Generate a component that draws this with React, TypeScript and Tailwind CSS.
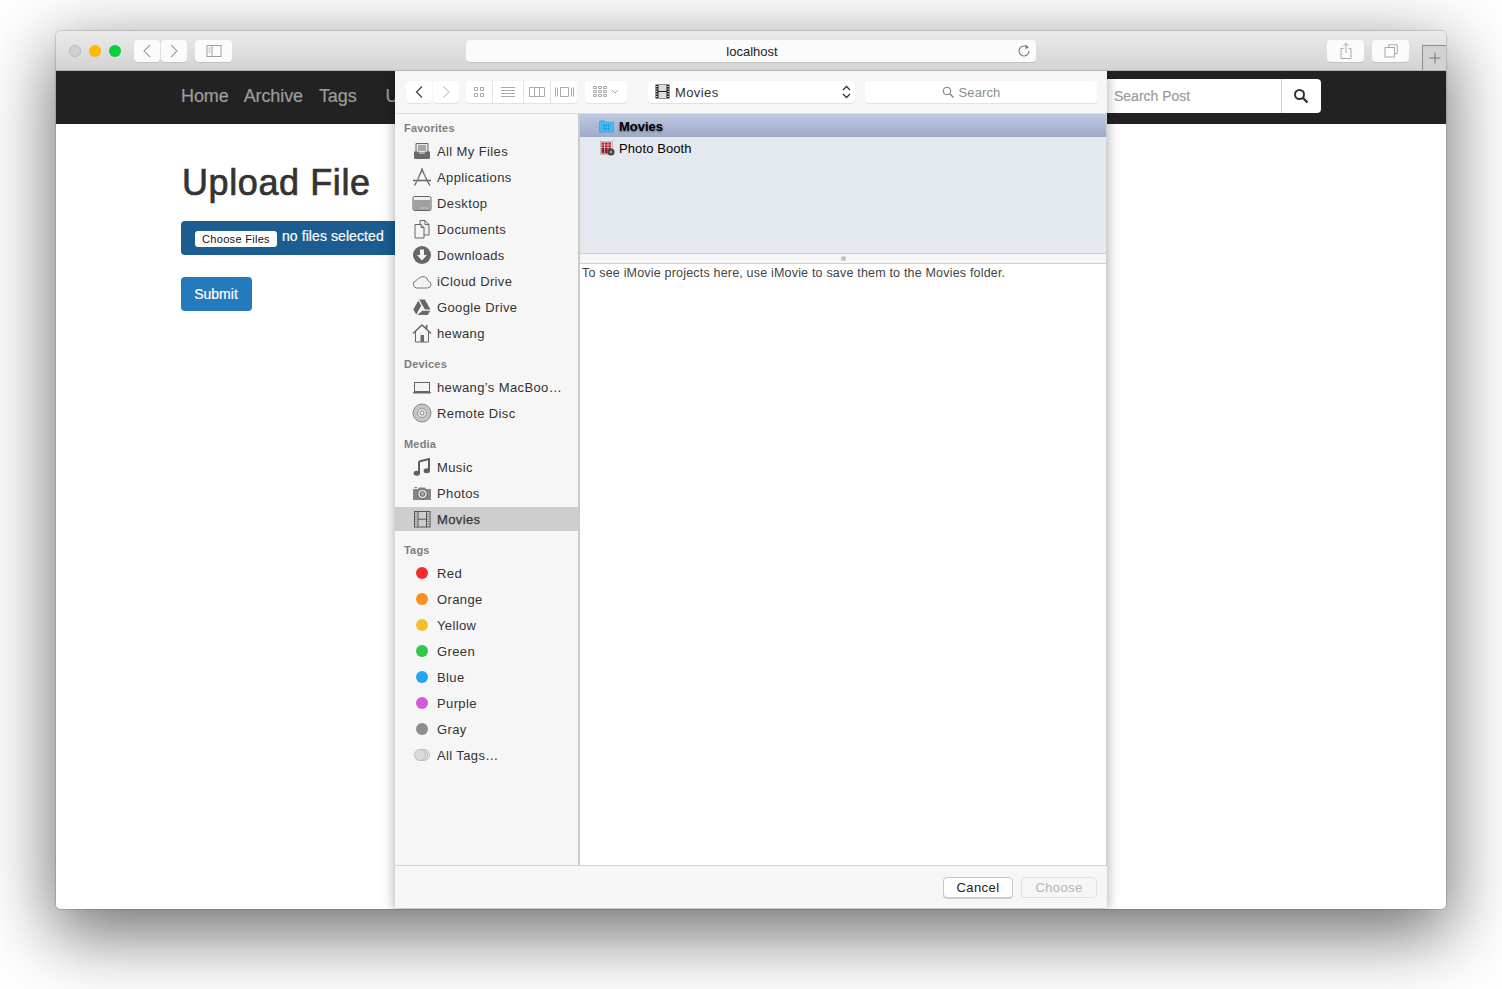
import type { ReactNode } from "react";

const FONT = "font-['Liberation_Sans',Arial,sans-serif]";

function Ico({ children, w = 20, h = 20, box = "0 0 20 20" }: { children: ReactNode; w?: number; h?: number; box?: string }) {
  return (
    <svg width={w} height={h} viewBox={box} fill="none" aria-hidden>
      {children}
    </svg>
  );
}

const G = "#666";

const icons: Record<string, ReactNode> = {
  files: (
    <Ico>
      <path d="M4 2.500h12v9.500H4z" fill="#e8e8e8" stroke={G} />
      <path d="M6 5h8M6 7h8M6 9h8" stroke={G} />
      <path d="M2 10.500h4.500l1 2.500h5l1-2.500H18v6a1.500 1.500 0 0 1-1.500 1.500h-13A1.500 1.500 0 0 1 2 16.500z" fill="#6a6a6a" />
    </Ico>
  ),
  apps: (
    <Ico>
      <path d="M10.500 1.500 5.500 13M9.500 1.500l6 13M1 13.500h18M2.500 18.500l3.500-6M18 18.500l-3.500-6" stroke={G} strokeWidth="1.400" />
      <path d="M7.500 8.500 4 16M12.500 7.500 14.500 12" stroke="#999" />
    </Ico>
  ),
  desktop: (
    <Ico>
      <rect x="1" y="3.500" width="18" height="14" rx="1.500" fill="#eee" stroke={G} />
      <rect x="1.500" y="7" width="17" height="10" fill="#a0a0a0" />
      <path d="M9 15h.9M11 15h.9M13 15h.9M15 15h.9" stroke="#fff" />
    </Ico>
  ),
  docs: (
    <Ico>
      <path d="M8 1.500h5l4 4v10.500H8z" fill="#eee" stroke={G} />
      <path d="M13 1.500v4h4" stroke={G} />
      <path d="M3 5.500h6l3 3v10.500H3z" fill="#f4f4f4" stroke={G} />
      <path d="M9 5.500v3h3" stroke={G} />
    </Ico>
  ),
  downloads: (
    <Ico>
      <circle cx="10" cy="10" r="9" fill="#666" />
      <path d="M8 4.500h4v5.500h3l-5 5.500L5 10h3z" fill="#f4f4f4" />
    </Ico>
  ),
  cloud: (
    <Ico>
      <path d="M4.500 17h11a3.500 3.500 0 0 0 .8-6.900A5.500 5.500 0 0 0 6.700 7.500 3 3 0 0 0 4.500 9.500 3.800 3.800 0 0 0 4.500 17z" fill="#f4f4f4" stroke="#777" />
    </Ico>
  ),
  drive: (
    <Ico>
      <path d="M7.200 2.500h5.600l5.700 10h-5.600z" fill="#666" />
      <path d="M6.300 3.800 9.200 8.800 4.200 17.500 1.300 12.500z" fill="#666" />
      <path d="M10.200 13.800h8.300L15.600 18H5.400z" fill="#6c6c6c" />
    </Ico>
  ),
  home: (
    <Ico>
      <path d="M1 10.500 10 2l9 8.500" stroke={G} strokeWidth="1.500" />
      <path d="M3.500 9v10h13V9" fill="#f4f4f4" stroke={G} />
      <path d="M14.500 2v4" stroke={G} strokeWidth="1.800" />
      <rect x="8.500" y="12" width="3.500" height="7" fill="#6a6a6a" />
    </Ico>
  ),
  laptop: (
    <Ico>
      <rect x="2.500" y="5.500" width="15" height="9" fill="#f4f4f4" stroke={G} />
      <path d="M1 15h18v.5a1 1 0 0 1-1 1H2a1 1 0 0 1-1-1z" fill="#666" />
    </Ico>
  ),
  disc: (
    <Ico>
      <circle cx="10" cy="10" r="9" fill="#c4c4c4" stroke="#888" />
      <circle cx="10" cy="10" r="4.500" fill="#e4e4e4" stroke="#999" />
      <circle cx="10" cy="10" r="2" fill="#f6f6f6" stroke="#888" />
    </Ico>
  ),
  music: (
    <Ico>
      <path d="M7 4.500 17 2v11.500" stroke="#5f5f5f" strokeWidth="2" />
      <path d="M7 4.500V16" stroke="#5f5f5f" strokeWidth="2" />
      <ellipse cx="4.800" cy="16.300" rx="3.200" ry="2.500" fill="#5f5f5f" />
      <ellipse cx="14.800" cy="13.800" rx="3.200" ry="2.500" fill="#5f5f5f" />
    </Ico>
  ),
  photos: (
    <Ico>
      <path d="M1 6h5l1-1.500h6L14 6h5v11H1z" fill="#858585" />
      <path d="M2.500 4.500h2.500" stroke="#777" strokeWidth="1.200" />
      <circle cx="10.500" cy="11" r="4.800" fill="#ddd" stroke="#666" />
      <circle cx="10.500" cy="11" r="2.300" fill="#aaa" stroke="#666" />
    </Ico>
  ),
  movies: (
    <Ico>
      <rect x="2.500" y="2.500" width="15.500" height="15.500" fill="none" stroke="#555" />
      <path d="M6 2.500v15.500M14.500 2.500v15.500M6 10.200h8.500" stroke="#555" />
      <path d="M3 5h2.500M3 7.500h2.500M3 10h2.500M3 12.500h2.500M3 15h2.500M15 5h2.500M15 7.500h2.500M15 10h2.500M15 12.500h2.500M15 15h2.500" stroke="#888" />
    </Ico>
  ),
  allTags: (
    <Ico w={16} h={14} box="0 0 16 14">
      <circle cx="10" cy="7" r="5.500" fill="#e8e8e8" stroke="#c0c0c0" />
      <circle cx="8" cy="7" r="5.500" fill="#e4e4e4" stroke="#c0c0c0" />
      <circle cx="6" cy="7" r="5.500" fill="#dcdcdc" stroke="#bbb" />
    </Ico>
  ),
};

type Row = { label: string; icon?: string; dot?: string; active?: boolean };

const groups: { title: string; rows: Row[] }[] = [
  {
    title: "Favorites",
    rows: [
      { label: "All My Files", icon: "files" },
      { label: "Applications", icon: "apps" },
      { label: "Desktop", icon: "desktop" },
      { label: "Documents", icon: "docs" },
      { label: "Downloads", icon: "downloads" },
      { label: "iCloud Drive", icon: "cloud" },
      { label: "Google Drive", icon: "drive" },
      { label: "hewang", icon: "home" },
    ],
  },
  {
    title: "Devices",
    rows: [
      { label: "hewang’s MacBoo…", icon: "laptop" },
      { label: "Remote Disc", icon: "disc" },
    ],
  },
  {
    title: "Media",
    rows: [
      { label: "Music", icon: "music" },
      { label: "Photos", icon: "photos" },
      { label: "Movies", icon: "movies", active: true },
    ],
  },
  {
    title: "Tags",
    rows: [
      { label: "Red", dot: "bg-[#f8282c]" },
      { label: "Orange", dot: "bg-[#f7901e]" },
      { label: "Yellow", dot: "bg-[#f2c12a]" },
      { label: "Green", dot: "bg-[#2fc84a]" },
      { label: "Blue", dot: "bg-[#27a4f4]" },
      { label: "Purple", dot: "bg-[#d35ad6]" },
      { label: "Gray", dot: "bg-[#8e8e8e]" },
      { label: "All Tags…", icon: "allTags" },
    ],
  },
];

function SafariButton({ className, children }: { className: string; children: ReactNode }) {
  return (
    <div className={`flex h-[22px] items-center justify-center rounded-[4px] bg-[#fbfbfb] shadow-[0_1px_0_rgba(0,0,0,0.1)] ${className}`}>
      {children}
    </div>
  );
}

function TitleBar() {
  return (
    <div className="flex h-10 items-center border-b border-[#b4b4b4] bg-gradient-to-b from-[#ebebeb] to-[#d3d3d3] pl-[13px]">
      <div className="flex gap-2">
        <span className="h-3 w-3 rounded-full border border-[#bbb] bg-[#d0d0d0]" />
        <span className="h-3 w-3 rounded-full bg-[#fdb900]" />
        <span className="h-3 w-3 rounded-full bg-[#06d13c]" />
      </div>
      <div className="ml-[13px] flex gap-px">
        <SafariButton className="w-[26px]">
          <Ico w={12} h={16} box="0 0 12 16">
            <path d="M9 2 3 8l6 6" stroke="#a0a0a0" strokeWidth="1.100" />
          </Ico>
        </SafariButton>
        <SafariButton className="w-[26px]">
          <Ico w={12} h={16} box="0 0 12 16">
            <path d="m3 2 6 6-6 6" stroke="#a0a0a0" strokeWidth="1.100" />
          </Ico>
        </SafariButton>
      </div>
      <SafariButton className="ml-2 w-[37px]">
        <Ico w={16} h={12} box="0 0 16 12">
          <rect x="1" y="0.500" width="14" height="11" stroke="#a0a0a0" />
          <path d="M6 .5v11" stroke="#a0a0a0" />
          <path d="M2.500 3h2M2.500 5h2M2.500 7h2" stroke="#b4b4b4" />
        </Ico>
      </SafariButton>
      <div className="relative ml-[234px] flex h-[22px] w-[570px] items-center justify-center rounded-[4px] bg-[#fbfbfb] pl-[2px] pt-[2px] text-[13px] text-[#222] shadow-[0_1px_0_rgba(0,0,0,0.1)]">
        localhost
        <span className="absolute right-[4px] top-[3px]">
          <Ico w={16} h={16} box="0 0 16 16">
            <path d="M11.700 4.600A5 5 0 1 0 13 8" stroke="#777" strokeWidth="1.100" />
            <path d="M9.500 1.500 13 4.500 9.500 6z" fill="#777" />
          </Ico>
        </span>
      </div>
      <SafariButton className="ml-[291px] w-[37px]">
        <Ico w={14} h={18} box="0 0 14 18">
          <path d="M4.500 6.500H2v10h10v-10H9.500M7 11V1.500M4.500 3.800 7 1.300l2.500 2.500" stroke="#aaa" />
        </Ico>
      </SafariButton>
      <SafariButton className="ml-2 w-[37px]">
        <Ico w={14} h={14} box="0 0 14 14">
          <path d="M4.500 3V.8h8.700v8.700H11" stroke="#aaa" />
          <rect x="1" y="3.500" width="9.500" height="9.500" stroke="#aaa" />
        </Ico>
      </SafariButton>
      <div className="ml-[13px] flex h-[25px] w-6 items-center justify-center self-end border-l border-t border-[#8e8e8e] bg-[#d2d2d2]">
        <Ico w={12} h={12} box="0 0 12 12">
          <path d="M6 .5v11M.5 6h11" stroke="#777" />
        </Ico>
      </div>
    </div>
  );
}

function Nav() {
  return (
    <nav className="flex h-[53px] items-center bg-[#222] pl-[125px] pr-[125px] text-[18px] tracking-[-0.1px] text-[#9d9d9d] [-webkit-text-stroke:0.2px_#9d9d9d]">
      <div className="mb-[2px] flex gap-[15px]">
        <span>Home</span>
        <span>Archive</span>
        <span className="ml-px">Tags</span>
        <span className="ml-[14px]">Upload</span>
      </div>
      <div className="mb-[4px] ml-auto flex h-[34px] overflow-hidden rounded-[4px] bg-white">
        <input
          readOnly
          placeholder="Search Post"
          className="w-[181px] border-r border-[#ccc] pl-[13px] pt-[1px] text-[14px] tracking-normal outline-none placeholder:text-[#999]"
        />
        <button type="button" className="flex w-[39px] items-center justify-center pr-[2px]">
          <Ico w={16} h={16} box="0 0 16 16">
            <circle cx="6.500" cy="6.500" r="4.500" stroke="#333" strokeWidth="2" />
            <path d="m10 10 4.500 4.500" stroke="#333" strokeWidth="2.400" />
          </Ico>
        </button>
      </div>
    </nav>
  );
}

function UploadForm() {
  return (
    <main className="flex-1 bg-white pl-[125px] pt-[37px]">
      <h1 className="pl-px text-[36px] leading-[44px] tracking-[0.6px] text-[#333] [-webkit-text-stroke:0.7px_#333]">Upload File</h1>
      <div className="mt-4 flex h-[34px] w-[270px] items-center rounded-[4px] bg-[#1b5c91] pl-[14px]">
        <span className="mt-[1px] flex h-4 w-[82px] items-center justify-center rounded-[3px] bg-white pt-[2px] text-[11px] tracking-[0.3px] text-[#111]">
          Choose Files
        </span>
        <span className="-mt-[3px] ml-[5px] text-[14px] tracking-[0.08px] text-white [-webkit-text-stroke:0.2px_#fff]">no files selected</span>
      </div>
      <button type="button" className="mt-[22px] block h-[34px] w-[71px] rounded-[4px] bg-[#2579bd] pr-[1px] text-[14px] text-white [-webkit-text-stroke:0.2px_#fff]">
        Submit
      </button>
    </main>
  );
}

function ToolButton({ className, children }: { className: string; children: ReactNode }) {
  return (
    <div className={`flex h-[22px] items-center justify-center rounded-[4px] bg-white shadow-[0_1px_0_rgba(0,0,0,0.08)] ${className}`}>
      {children}
    </div>
  );
}

function DialogToolbar() {
  return (
    <div className="flex h-[43px] items-center border-b border-[#dcdcdc] pb-px pl-[11px]">
      <div className="flex gap-px">
        <ToolButton className="w-[26px]">
          <Ico w={10} h={14} box="0 0 10 14">
            <path d="M8 1.500 2.500 7 8 12.500" stroke="#444" strokeWidth="1.300" />
          </Ico>
        </ToolButton>
        <ToolButton className="w-[26px]">
          <Ico w={10} h={14} box="0 0 10 14">
            <path d="M2.500 1.500 8 7l-5.500 5.500" stroke="#ccc" strokeWidth="1.300" />
          </Ico>
        </ToolButton>
      </div>
      <div className="ml-[7px] flex h-[22px] w-[111px] rounded-[4px] bg-white shadow-[0_1px_0_rgba(0,0,0,0.08)]">
        <div className="flex w-[27px] items-center justify-center border-r border-[#e4e4e4]">
          <Ico w={10} h={10} box="0 0 10 10">
            <path d="M.5.500h3v3h-3zM6.500.500h3v3h-3zM.5 6.500h3v3h-3zM6.500 6.500h3v3h-3z" stroke="#aaa" />
          </Ico>
        </div>
        <div className="flex w-[31px] items-center justify-center border-r border-[#e4e4e4]">
          <Ico w={14} h={10} box="0 0 14 10">
            <path d="M0 .5h14M0 3.500h14M0 6.500h14M0 9.500h14" stroke="#aaa" />
          </Ico>
        </div>
        <div className="flex w-[27px] items-center justify-center border-r border-[#e4e4e4]">
          <Ico w={16} h={10} box="0 0 16 10">
            <path d="M.5.500h15v9H.5zM5.500.500v9M10.500.500v9" stroke="#aaa" />
          </Ico>
        </div>
        <div className="flex flex-1 items-center justify-center">
          <Ico w={19} h={10} box="0 0 19 10">
            <path d="M5.500.500h8v9h-8zM.5.500v9M2.500.500v9M16.500.500v9M18.500.500v9" stroke="#aaa" />
          </Ico>
        </div>
      </div>
      <ToolButton className="ml-2 w-[42px] gap-1">
        <Ico w={14} h={11} box="0 0 14 11">
          <path d="M.5.500h3v2h-3zM5.500.500h3v2h-3zM10.500.500h3v2h-3zM.5 4.500h3v2h-3zM5.500 4.500h3v2h-3zM10.500 4.500h3v2h-3zM.5 8.500h3v2h-3zM5.500 8.500h3v2h-3zM10.500 8.500h3v2h-3z" stroke="#aaa" />
        </Ico>
        <Ico w={8} h={6} box="0 0 8 6">
          <path d="m.8.800 3.200 3.200L7.200.8" stroke="#aaa" />
        </Ico>
      </ToolButton>
      <ToolButton className="ml-[21px] w-[207px] justify-start pl-[7px] text-[13px] text-[#333]">
        <Ico w={15} h={15} box="0 0 15 15">
          <rect x="0.500" y="0.500" width="14" height="14" fill="#222" />
          <rect x="3.500" y="1" width="8" height="6" fill="#ddd" />
          <rect x="3.500" y="8" width="8" height="6" fill="#ddd" />
          <path d="M1 2.500h1.500M1 5h1.500M1 7.500h1.500M1 10h1.500M1 12.500h1.500M12.500 2.500H14M12.500 5H14M12.500 7.500H14M12.500 10H14M12.500 12.500H14" stroke="#ddd" />
        </Ico>
        <span className="ml-[5px] flex-1 pt-[2px] tracking-[0.4px]">Movies</span>
        <span className="mr-[4px]">
          <Ico w={9} h={14} box="0 0 9 14">
            <path d="m1 5 3.500-3.500L8 5M1 9l3.500 3.500L8 9" stroke="#333" strokeWidth="1.300" />
          </Ico>
        </span>
      </ToolButton>
      <ToolButton className="ml-[10px] w-[232px] gap-[5px] pr-[20px] text-[13px] text-[#8e8e8e]">
        <Ico w={12} h={12} box="0 0 12 12">
          <circle cx="5" cy="5" r="3.800" stroke="#777" />
          <path d="m8 8 3.500 3.500" stroke="#777" strokeWidth="1.200" />
        </Ico>
        <span className="pt-[2px] tracking-[0.1px]">Search</span>
      </ToolButton>
    </div>
  );
}

function Sidebar() {
  return (
    <aside className="flex w-[185px] shrink-0 flex-col gap-[10px] border-r-2 border-[#cbcbcb] pt-[6px] text-[13px] text-[#333]">
      {groups.map((g) => (
        <section key={g.title}>
          <h3 className="mb-[2px] flex h-4 items-center pl-[9px] text-[11px] font-bold tracking-[0.2px] text-[#7e7e7e]">{g.title}</h3>
          {g.rows.map((r) => (
            <div key={r.label} className="flex h-[26px] items-center">
              <div className={`flex h-6 w-full items-center ${r.active ? "bg-[#cdcdcd]" : ""}`}>
                <span className="flex w-[42px] shrink-0 items-center justify-center pl-[12px] pr-px">
                  {r.icon ? icons[r.icon] : <span className={`h-3 w-3 rounded-full ${r.dot}`} />}
                </span>
                <span className={`pt-[2px] tracking-[0.38px] ${r.active ? "[-webkit-text-stroke:0.25px_#333]" : ""}`}>{r.label}</span>
              </div>
            </div>
          ))}
        </section>
      ))}
    </aside>
  );
}

function BrowserPane() {
  return (
    <div className="flex min-w-0 flex-1 flex-col border-r border-[#cfcfcf] bg-white text-[13px]">
      <div className="h-[139px] bg-[#e4e9ef] text-black">
        <div className="flex h-[23px] items-center bg-gradient-to-b from-[#bfcae1] to-[#9eaac8] pl-[19px]">
          <Ico w={15} h={14} box="0 0 16 14">
            <path d="M.5 2.500A1 1 0 0 1 1.500 1.500h4L7 3h8a.5.500 0 0 1 .5.500V13.500H.5z" fill="#3fbdf7" stroke="#2a97d6" strokeWidth="0.600" />
            <rect x="5" y="5.500" width="6" height="5.500" fill="#1d8ddc" />
            <path d="M7 5.500v5.500M9 5.500v5.500M5 8.200h6" stroke="#7ed0f8" strokeWidth="0.600" />
          </Ico>
          <span className="ml-[5px] pt-[2px] font-bold [text-shadow:0_1px_2px_rgba(0,0,0,0.45)]">Movies</span>
        </div>
        <div className="flex h-[22px] items-center pl-[20px]">
          <Ico w={15} h={15} box="0 0 15 15">
            <rect x="0.300" y="0.300" width="12" height="13" fill="#e4e4e4" stroke="#a0a0a0" strokeWidth="0.600" />
            <rect x="1.500" y="1.500" width="9.500" height="5" fill="#b51d24" />
            <rect x="1.500" y="7" width="9.500" height="5.500" fill="#8f1a20" />
            <path d="M4.500 1.500v11M8 1.500v11M1.500 4h9.500" stroke="#eee" strokeWidth="0.600" />
            <circle cx="11" cy="11" r="3.500" fill="#444" />
            <circle cx="11" cy="11" r="1.300" fill="#aaa" />
          </Ico>
          <span className="ml-[4px] pt-[2px] tracking-[0.1px]">Photo Booth</span>
        </div>
      </div>
      <div className="flex h-[11px] items-center justify-center border-y border-[#cfcfcf] bg-[#f6f6f6]">
        <span className="h-[5px] w-[5px] rounded-full bg-[#c4c4c4]" />
      </div>
      <p className="flex-1 px-[2px] pt-[1px] text-[12.500px] leading-[16px] tracking-[0.19px] text-[#444]">
        To see iMovie projects here, use iMovie to save them to the Movies folder.
      </p>
    </div>
  );
}

function Dialog() {
  return (
    <div className="absolute left-[339px] top-0 flex h-[837px] w-[712px] flex-col bg-[#f6f6f6] shadow-[0_2px_12px_rgba(0,0,0,0.35)]">
      <DialogToolbar />
      <div className="flex min-h-0 flex-1 border-b border-[#d2d2d2]">
        <Sidebar />
        <BrowserPane />
      </div>
      <div className="flex h-[42px] items-center justify-end gap-2 pr-[10px] text-[13px] tracking-[0.4px]">
        <button type="button" className="h-[21px] w-[70px] rounded-[4px] border border-[#c8c8c8] bg-white text-[#222] shadow-[0_1px_0_rgba(0,0,0,0.15)]">
          Cancel
        </button>
        <button type="button" className="h-[21px] w-[76px] rounded-[4px] border border-[#e0e0e0] bg-[#f6f6f6] text-[#b4b4b4]">
          Choose
        </button>
      </div>
    </div>
  );
}

export default function App() {
  return (
    <div className={`h-[989px] w-[1502px] overflow-hidden bg-white pl-[56px] pt-[31px] ${FONT}`}>
      <div className="flex h-[878px] w-[1390px] flex-col rounded-[5px] shadow-[0_22px_70px_4px_rgba(0,0,0,0.56),0_0_1px_1px_rgba(0,0,0,0.14)]">
        <div className="overflow-hidden rounded-t-[5px]">
          <TitleBar />
        </div>
        <div className="relative flex min-h-0 flex-1 flex-col overflow-hidden rounded-b-[5px]">
          <Nav />
          <UploadForm />
          <Dialog />
        </div>
      </div>
    </div>
  );
}
